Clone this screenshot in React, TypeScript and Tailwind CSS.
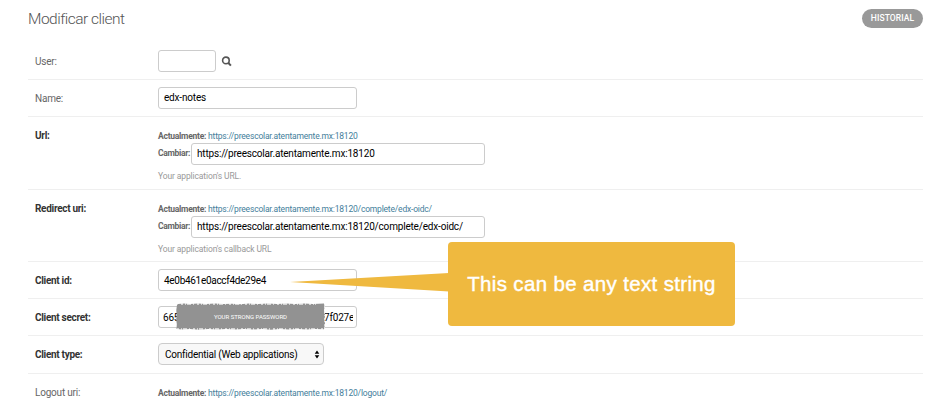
import type { ReactNode } from "react";

function Row({ label, bold, height, top, children }: { label: string; bold?: boolean; height: string; top: string; children: ReactNode }) {
  return (
    <div className={`flex shrink-0 border-b border-[#efefef] pl-[7px] ${height}`}>
      <div className={`w-[123px] shrink-0 text-[10px] leading-[12px] ${top} ${bold ? "font-bold tracking-[-0.3px] text-[#333]" : "tracking-[-0.2px] text-[#666]"}`}>
        {label}
      </div>
      <div className="min-w-0 flex-1">{children}</div>
    </div>
  );
}

function Field({ value, width, low, tracking = "tracking-[-0.18px]" }: { value: string; width: string; low?: boolean; tracking?: string }) {
  return (
    <div className={`flex h-[22px] items-center rounded-[3px] border border-[#ccc] bg-white px-[5px] text-[10px] leading-[12px] whitespace-nowrap text-black ${width} ${tracking} ${low ? "pt-[2px]" : ""}`}>
      {value}
    </div>
  );
}

function Current({ url }: { url: string }) {
  return (
    <div className="text-[8.5px] leading-[10px] tracking-[-0.19px] whitespace-nowrap text-[#447e9b]">
      <span className="font-bold tracking-[-0.25px] text-[#666]">Actualmente:</span> {url}
    </div>
  );
}

function UrlField({ url, help }: { url: string; help: string }) {
  return (
    <div className="pt-[14px]">
      <Current url={url} />
      <div className="mt-[2px] flex">
        <span className="w-[33px] shrink-0 pt-[5px] text-[8.5px] leading-[10px] font-bold tracking-[-0.3px] text-[#666]">Cambiar:</span>
        <Field value={url} width="w-[294px]" />
      </div>
      <div className="mt-[6px] text-[8.5px] leading-[10px] tracking-[-0.12px] text-[#999]">{help}</div>
    </div>
  );
}

export default function App() {
  return (
    <div className="relative flex h-[400px] w-[940px] flex-col overflow-hidden bg-white pr-[17px] pl-[28px] font-[Roboto,'Liberation_Sans',sans-serif]">
      <header className="flex h-[43px] shrink-0 justify-between">
        <h1 className="pt-[9px] text-[15.5px] leading-[20px] font-light tracking-[-0.5px] text-[#555]">Modificar client</h1>
        <button className="mt-[9px] h-[19px] w-[61px] rounded-full bg-[#999] text-[8.5px] leading-[19px] font-medium tracking-[0.1px] text-white">HISTORIAL</button>
      </header>

      <Row label="User:" height="h-[37px]" top="pt-[13px]">
        <div className="flex items-center pt-[7px]">
          <Field value="" width="w-[58px]" />
          <svg className="ml-[5px] size-[11px]" viewBox="0 0 11 11" fill="none" stroke="#555" strokeWidth="1.6">
            <circle cx="4.9" cy="4.4" r="3.3" />
            <path d="m7.2 6.8 2.7 2.8" strokeWidth="2" />
          </svg>
        </div>
      </Row>
      <Row label="Name:" height="h-[37px]" top="pt-[13px]">
        <div className="pt-[7px]"><Field value="edx-notes" width="w-[199px]" /></div>
      </Row>
      <Row label="Url:" bold height="h-[73px]" top="pt-[13px]">
        <UrlField url="https://preescolar.atentamente.mx:18120" help="Your application's URL." />
      </Row>
      <Row label="Redirect uri:" bold height="h-[72px]" top="pt-[13px]">
        <UrlField url="https://preescolar.atentamente.mx:18120/complete/edx-oidc/" help="Your application's callback URL" />
      </Row>
      <Row label="Client id:" bold height="h-[37px]" top="pt-[13px]">
        <div className="pt-[7px]"><Field value="4e0b461e0accf4de29e4" width="w-[199px]" low tracking="tracking-[-0.3px]" /></div>
      </Row>
      <Row label="Client secret:" bold height="h-[37px]" top="pt-[13px]">
        <div className="relative pt-[7px]">
          <div className="flex h-[22px] w-[199px] items-center justify-between rounded-[3px] border border-[#ccc] pt-[2px] pr-[3px] pl-[4px] text-[10px] leading-[12px] tracking-[-0.2px] text-black">
            <span>665</span>
            <span className="whitespace-nowrap">67f027<span className="inline-block w-[4px] overflow-hidden align-top">e</span></span>
          </div>
          <div className="absolute top-[4px] left-[18px] flex h-[27px] w-[149px] items-center justify-center">
            <svg className="absolute inset-0 size-full" viewBox="0 0 149 27">
              <path fill="#929292" d="M2 1 8 .5 14 1 22 .6 30 1.1 39 .5 48 1 56 .7 64 1.2 73 .5 82 1 92 .5 101 1.1 110 .6 119 1 128 .5 137 1.1 148 .5 148.5 4 148 8 149 12 148.5 17 149 21 148 26.3 139 26 131 26.6 122 26 113 26.5 104 26.1 95 26.7 86 26.1 77 26.5 68 26.1 59 26.6 50 26 41 26.5 32 26.1 23 26.7 14 26.1 6 26.5 .5 26 .8 21 .2 17 .6 12 .3 7 1 2Z" />
              <path d="M5 1H140M1 26H148" stroke="#fff" strokeWidth="1.4" strokeDasharray="2 2 1 1 4 2 1 3" opacity=".8" />
              <path d="M148.5 3V25" stroke="#fff" strokeWidth=".8" strokeDasharray="2 1 1 2" opacity=".7" />
            </svg>
            <span className="relative text-[6px] leading-[8px] text-white">YOUR STRONG PASSWORD</span>
          </div>
        </div>
      </Row>
      <Row label="Client type:" bold height="h-[38px]" top="pt-[13px]">
        <div className="pt-[7px]">
          <div className="flex h-[22px] w-[166px] items-center justify-between rounded-[4px] border border-[#ccc] bg-[#f8f8f8] pt-[2px] pr-[3px] pl-[6px] text-[10px] leading-[12px] tracking-[-0.23px] text-black">
            Confidential (Web applications)
            <svg className="mb-[2px] h-[9px] w-[6px]" viewBox="0 0 6 9"><path d="M3 .5 5.3 3.7H.7ZM3 8.5.7 5.3H5.3Z" /></svg>
          </div>
        </div>
      </Row>
      <Row label="Logout uri:" height="h-[40px]" top="pt-[13px]">
        <div className="pt-[14px]"><Current url="https://preescolar.atentamente.mx:18120/logout/" /></div>
      </Row>

      <svg className="absolute top-[273px] left-[290px] h-[19px] w-[159px]" viewBox="0 0 159 19">
        <path d="M0 9 159 0V18.5Z" fill="#efb93f" />
      </svg>
      <div className="absolute top-[242px] left-[448px] flex h-[84px] w-[287px] items-center justify-center rounded-[4px] bg-[#efb93f] font-['Liberation_Sans',Arial,sans-serif] text-[20.5px] leading-[24px] tracking-[0.35px] whitespace-nowrap text-white [-webkit-text-stroke:0.4px_white]">
        This can be any text string
      </div>
    </div>
  );
}
